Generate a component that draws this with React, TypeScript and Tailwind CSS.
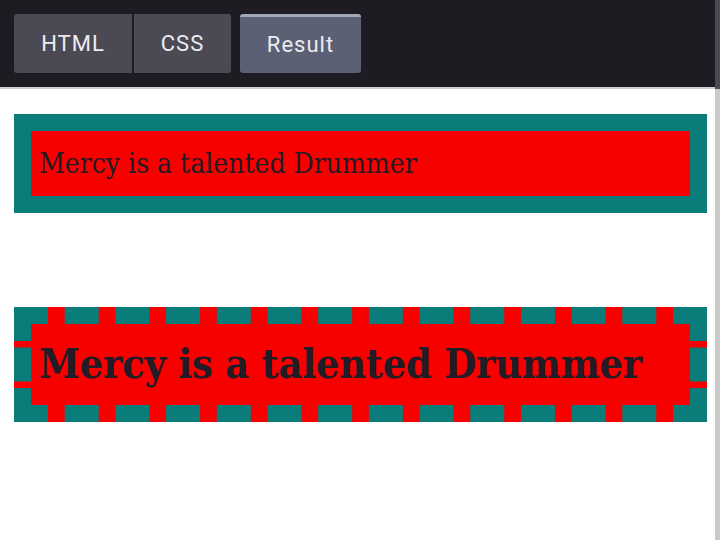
export default function App() {
  return (
    <div className="w-[720px] h-[540px] overflow-hidden flex bg-white">
      <div className="flex-1 flex flex-col">
        {/* header with tabs */}
        <div className="h-[89px] bg-[#1f1b22] flex items-start pt-[14px] pl-[14px] border-b-2 border-[#cfcfd2]">
          <div className="flex h-[59px]">
            <button className="w-[118px] h-full bg-[#4b4a54] rounded-l-[3px] text-[#ececf0] text-[22px] tracking-[1px] font-['Roboto',sans-serif]">
              HTML
            </button>
            <button className="w-[97px] h-full ml-[2px] bg-[#4b4a54] rounded-r-[3px] text-[#ececf0] text-[22px] tracking-[1px] font-['Roboto',sans-serif]">
              CSS
            </button>
            <button className="w-[121px] h-full ml-[9px] pb-[2px] bg-[#5b6075] rounded-[3px] border-t-[3px] border-[#a3a7b4] text-[#ececf0] text-[22px] tracking-[1px] font-['Roboto',sans-serif]">
              Result
            </button>
          </div>
        </div>

        {/* result frame */}
        <div className="flex-1 pl-[14px] pt-[25px]">
          <p className="w-[693px] h-[99px] border-[17px] border-solid border-[#0a7d7a] bg-[#f70000] pl-[8px] flex items-center text-[#211c26] text-[28px] font-['DejaVu_Serif_Condensed','DejaVu_Serif',serif]">
            Mercy is a talented Drummer
          </p>
          <p className="mt-[94px] w-[693px] h-[115px] border-[17px] border-dashed border-[#0a7d7a] bg-[#f70000] pl-[8px] flex items-center text-[#211c26] text-[41px] tracking-[-0.2px] font-bold font-['DejaVu_Serif_Condensed','DejaVu_Serif',serif]">
            Mercy is a talented Drummer
          </p>
        </div>
      </div>
      {/* scrollbar */}
      <div className="w-[5px] flex flex-col">
        <div className="h-[89px] bg-[#4a4a55]" />
        <div className="flex-1 bg-[#c9c9c9]" />
      </div>
    </div>
  );
}
